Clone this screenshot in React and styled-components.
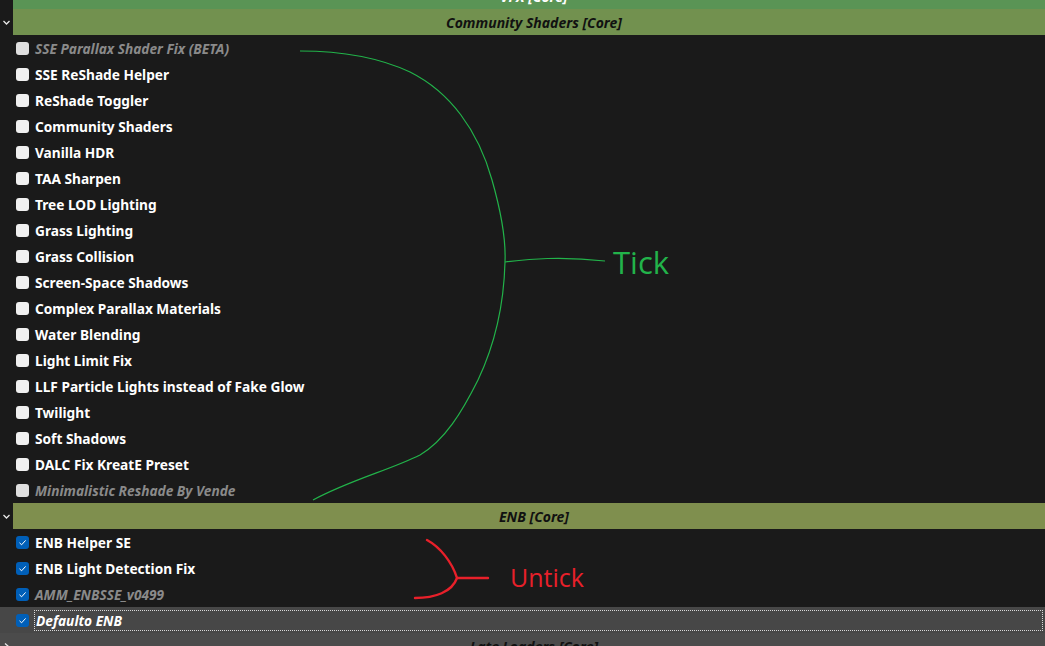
import React from "react";
import styled, { createGlobalStyle } from "styled-components";

const GlobalStyle = createGlobalStyle`
  html, body {
    margin: 0;
    padding: 0;
    background: #1a1a1a;
  }
  body {
    font-family: "Noto Sans", "Open Sans", sans-serif;
  }
`;

const Page = styled.div`
  position: relative;
  width: 1045px;
  height: 646px;
  overflow: hidden;
  background: #1a1a1a;
`;

const List = styled.div`
  display: flex;
  flex-direction: column;
  margin-top: -17px;
`;

const HeaderRow = styled.div`
  display: flex;
  height: 26px;
  background: ${(p) => (p.$grey ? p.$color : "#1a1a1a")};
`;

const Gutter = styled.div`
  width: 13px;
  display: flex;
  align-items: center;
  justify-content: center;
  color: #e8e8e8;
`;

const Band = styled.div`
  flex: 1;
  display: flex;
  align-items: center;
  justify-content: center;
  background: ${(p) => p.$color};
  color: ${(p) => p.$text};
  font-size: 14px;
  font-weight: 700;
  font-style: italic;
  padding-left: 10px;
`;

const Row = styled.div`
  display: flex;
  align-items: center;
  height: 26px;
  padding-left: 16px;
  background: ${(p) => (p.$selected ? "#474747" : "transparent")};
`;

const Box = styled.span`
  width: 13px;
  height: 13px;
  box-sizing: border-box;
  border-radius: 3px;
  flex: none;
  display: flex;
  align-items: center;
  justify-content: center;
  background: ${(p) => (p.$checked ? "#005fb8" : "#f0f0f0")};
  opacity: ${(p) => (p.$dim && !p.$checked ? 0.92 : 1)};
`;

const Label = styled.span`
  margin-left: 5px;
  padding: 0 1px;
  font-size: 13.7px;
  font-weight: 700;
  line-height: 20px;
  padding-top: 1px;
  color: ${(p) => (p.$dim ? "#8a8a8a" : "#ffffff")};
  font-style: ${(p) => (p.$italic ? "italic" : "normal")};
  ${(p) =>
    p.$focus &&
    `
    flex: 1;
    margin-right: 2px;
    border: 1px dotted #d8d8d8;
    line-height: 19px;
    padding-top: 0;
  `}
`;

const Overlay = styled.svg`
  position: absolute;
  left: 0;
  top: 0;
  pointer-events: none;
`;

const Note = styled.span`
  position: absolute;
  left: ${(p) => p.$x}px;
  top: ${(p) => p.$y}px;
  color: ${(p) => p.$color};
  font-family: "Open Sans", "Noto Sans", sans-serif;
  font-size: ${(p) => p.$size}px;
  line-height: 1;
`;

const Chevron = ({ right }) => (
  <svg width="9" height="9" viewBox="0 0 9 9">
    {right ? (
      <path d="M3 1.5 L6.5 4.5 L3 7.5" fill="none" stroke="#e8e8e8" strokeWidth="1.3" />
    ) : (
      <path d="M1.5 3 L4.5 6 L7.5 3" fill="none" stroke="#e8e8e8" strokeWidth="1.3" />
    )}
  </svg>
);

const Check = () => (
  <svg width="9" height="9" viewBox="0 0 9 9">
    <path d="M1.5 4.8 L3.6 6.8 L7.6 2.4" fill="none" stroke="#ffffff" strokeWidth="1" />
  </svg>
);

const groups = [
  { title: "VFX [Core]", color: "#5a9455", text: "#ffffff", items: [] },
  {
    title: "Community Shaders [Core]",
    color: "#72914f",
    text: "#111111",
    items: [
      { name: "SSE Parallax Shader Fix (BETA)", dim: true },
      { name: "SSE ReShade Helper" },
      { name: "ReShade Toggler" },
      { name: "Community Shaders" },
      { name: "Vanilla HDR" },
      { name: "TAA Sharpen" },
      { name: "Tree LOD Lighting" },
      { name: "Grass Lighting" },
      { name: "Grass Collision" },
      { name: "Screen-Space Shadows" },
      { name: "Complex Parallax Materials" },
      { name: "Water Blending" },
      { name: "Light Limit Fix" },
      { name: "LLF Particle Lights instead of Fake Glow" },
      { name: "Twilight" },
      { name: "Soft Shadows" },
      { name: "DALC Fix KreatE Preset" },
      { name: "Minimalistic Reshade By Vende", dim: true },
    ],
  },
  {
    title: "ENB [Core]",
    color: "#7f8f4e",
    text: "#111111",
    items: [
      { name: "ENB Helper SE", checked: true },
      { name: "ENB Light Detection Fix", checked: true },
      { name: "AMM_ENBSSE_v0499", checked: true, dim: true },
      { name: "Defaulto ENB", checked: true, selected: true },
    ],
  },
  {
    title: "Late Loaders [Core]",
    color: "#4b4b4b",
    text: "#111111",
    grey: true,
    collapsed: true,
    items: [],
  },
];

export default function App() {
  return (
    <>
      <GlobalStyle />
      <Page>
        <List>
          {groups.map((g) => (
            <React.Fragment key={g.title}>
              <HeaderRow $grey={g.grey} $color={g.color}>
                <Gutter>
                  <Chevron right={g.collapsed} />
                </Gutter>
                <Band $color={g.color} $text={g.text}>
                  {g.title}
                </Band>
              </HeaderRow>
              {g.items.map((it) => (
                <Row key={it.name} $selected={it.selected}>
                  <Box $checked={it.checked} $dim={it.dim}>
                    {it.checked && <Check />}
                  </Box>
                  <Label
                    $dim={it.dim}
                    $italic={it.dim || it.selected}
                    $focus={it.selected}
                  >
                    {it.name}
                  </Label>
                </Row>
              ))}
            </React.Fragment>
          ))}
        </List>

        <Overlay width="1045" height="646" viewBox="0 0 1045 646">
          <path
            d="M300 51 C340 51 380 58 410 72 C450 92 478 130 492 180 C502 215 506 240 505 262 C504 300 497 340 478 380 C462 412 445 440 420 455 C390 470 350 480 313 500"
            fill="none"
            stroke="#22b34a"
            strokeWidth="1.2"
          />
          <path
            d="M505 262 C530 259 560 256 605 261"
            fill="none"
            stroke="#22b34a"
            strokeWidth="1.2"
          />
          <path
            d="M427 540 C440 547 452 562 457 578 C452 592 435 598 415 598"
            fill="none"
            stroke="#e8202a"
            strokeWidth="2.4"
            strokeLinecap="round"
          />
          <path
            d="M457 578 L488 578"
            fill="none"
            stroke="#e8202a"
            strokeWidth="2.4"
            strokeLinecap="round"
          />
        </Overlay>
        <Note $x={613} $y={247} $size={31} $color="#22b34a">
          Tick
        </Note>
        <Note $x={510} $y={565} $size={25} $color="#e8202a">
          Untick
        </Note>
      </Page>
    </>
  );
}
